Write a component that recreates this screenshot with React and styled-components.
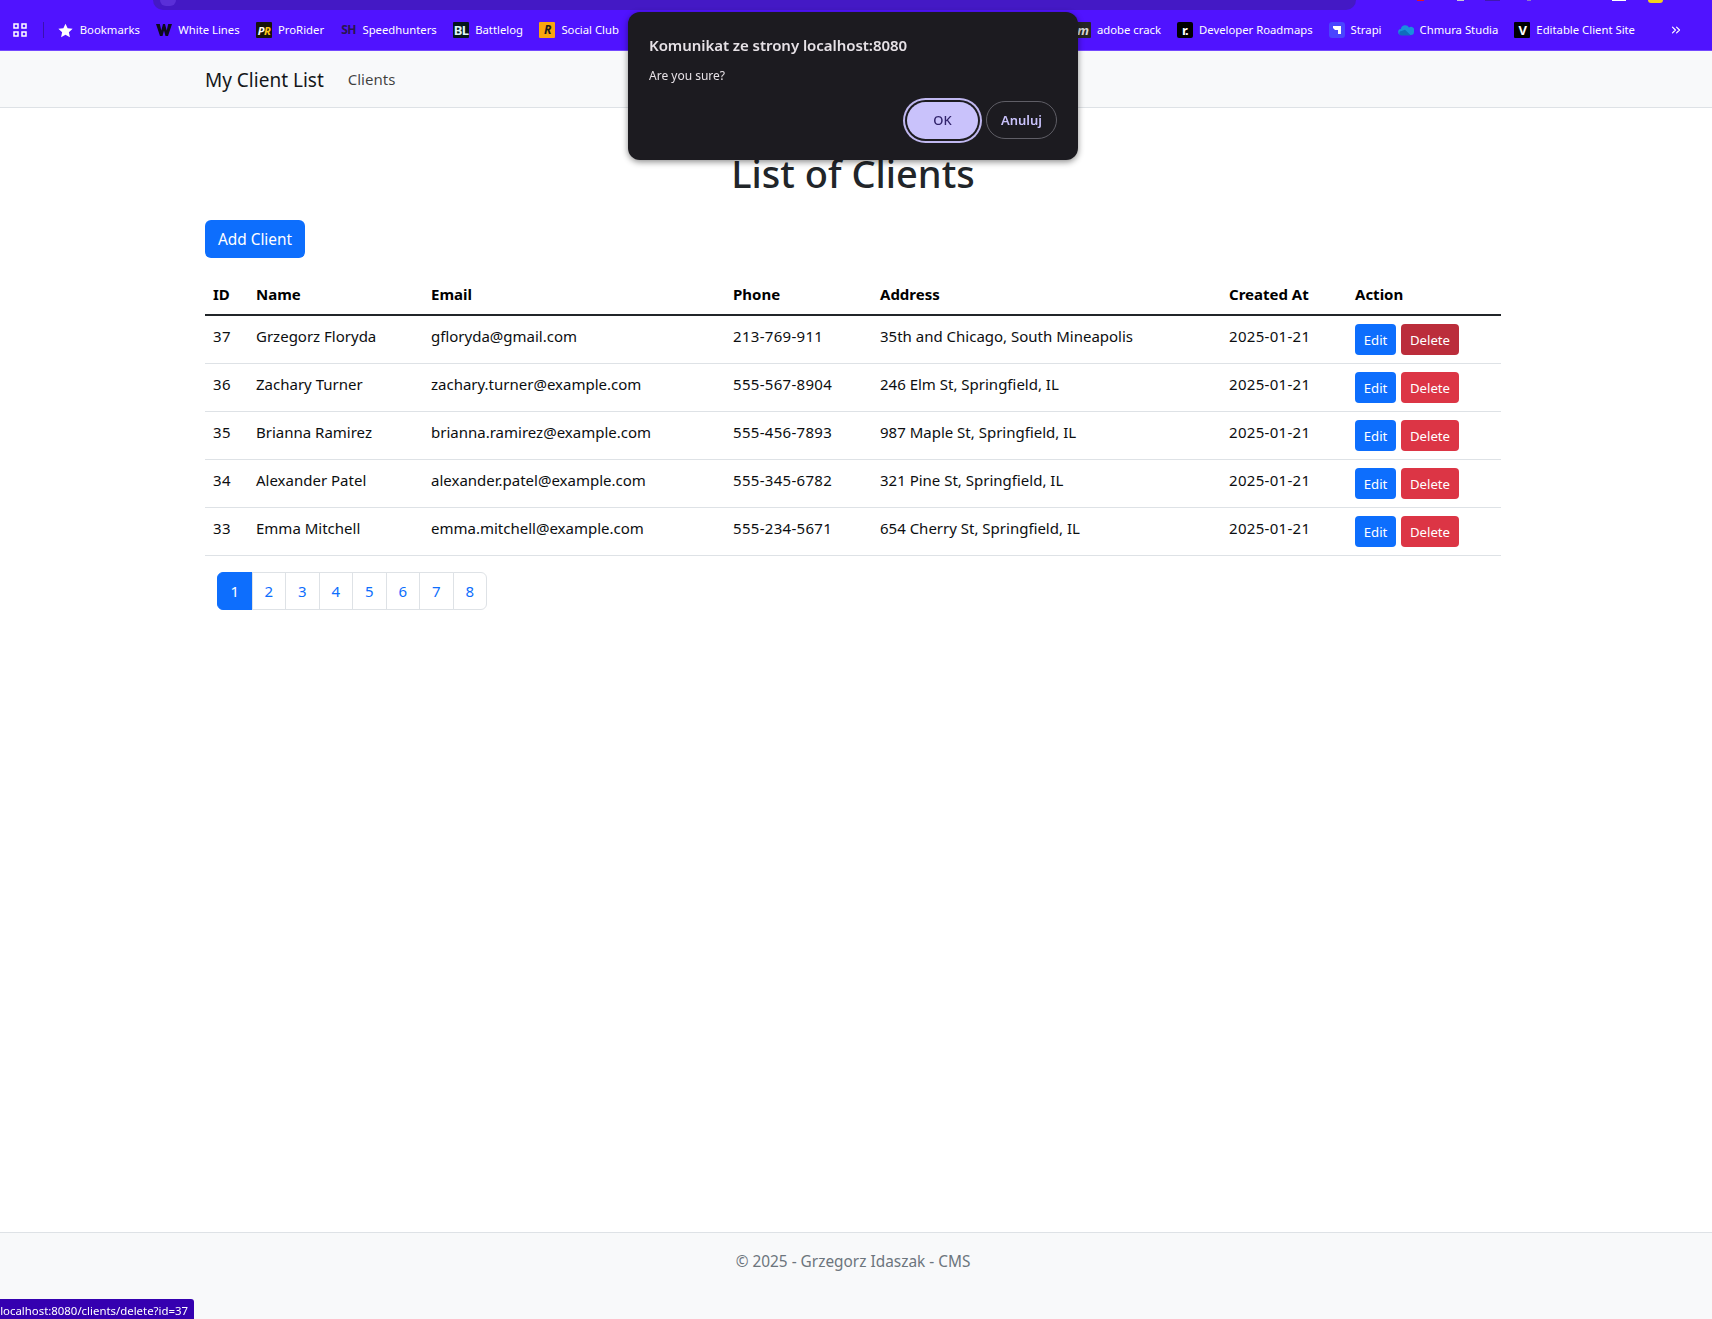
import React from 'react';
import styled, { createGlobalStyle } from 'styled-components';
import { ChevronsRight } from 'lucide-react';

const GlobalStyle = createGlobalStyle`
  * { box-sizing: border-box; }
  body {
    margin: 0;
    font-family: "Noto Sans", "Open Sans", "Liberation Sans", sans-serif;
    font-size: 15px;
    line-height: 24px;
    color: #212529;
    background: #fff;
  }
`;

const Page = styled.div`
  min-height: 100vh;
  display: flex;
  flex-direction: column;
`;

const BrowserTop = styled.div`
  height: 10px;
  background: #5013ff;
  display: flex;
  overflow: hidden;
  padding-left: 153px;
`;

const AddressBar = styled.div`
  width: 1203px;
  height: 10px;
  background: #4419c5;
  border-radius: 0 0 12px 12px;
  padding-left: 7px;
`;

const AddressDot = styled.div`
  width: 16px;
  height: 6px;
  border-radius: 0 0 8px 8px;
  background: #5a2fd8;
`;

const ToolbarBits = styled.div`
  display: flex;
  align-items: flex-start;
  margin-left: 61px;
`;

const ToolbarBit = styled.span`
  display: block;
  width: ${p => p.$w}px;
  height: ${p => p.$h}px;
  margin-left: ${p => p.$gap}px;
  background: ${p => p.$color};
  border-radius: ${p => (p.$round ? '0 0 8px 8px' : '0')};
`;

const BookmarkBar = styled.div`
  height: 41px;
  background: #5013ff;
  border-bottom: 1px solid #7448ff;
  display: flex;
  align-items: center;
  justify-content: space-between;
  padding: 0 29px 0 13px;
  color: #fff;
  font-size: 11.3px;
`;

const BookmarkGroup = styled.div`
  display: flex;
  align-items: center;
  gap: ${p => p.$gap}px;
`;

const Separator = styled.span`
  width: 1px;
  height: 16px;
  background: #3a12b0;
  margin-right: -3px;
`;

const Bookmark = styled.span`
  display: flex;
  align-items: center;
  gap: 6px;
  white-space: nowrap;
`;

const Favicon = styled.span`
  flex: none;
  width: 16px;
  height: 16px;
  display: flex;
  align-items: center;
  justify-content: center;
  background: ${p => p.$bg || 'transparent'};
  color: ${p => p.$color || '#fff'};
  font-size: ${p => p.$size || 10}px;
  font-weight: 700;
  font-style: ${p => (p.$italic ? 'italic' : 'normal')};
  border-radius: ${p => p.$radius || 1}px;
  letter-spacing: -0.6px;
  line-height: 1;
`;

const YellowLetter = styled.span`
  color: #ffc61a;
`;

const MoreButton = styled.span`
  display: flex;
  margin-left: 18px;
`;

const Navbar = styled.nav`
  height: 57px;
  background: #f8f9fa;
  border-bottom: 1px solid #dee2e6;
  display: flex;
  align-items: center;
  padding: 1px 0 0 205px;
`;

const Brand = styled.span`
  font-size: 19px;
  color: #14171a;
  margin-right: 24px;
`;

const NavLink = styled.span`
  color: rgba(0, 0, 0, 0.75);
  padding-bottom: 2px;
`;

const Main = styled.main`
  width: 1296px;
  margin-left: 205px;
  padding-top: 41px;
`;

const Title = styled.h1`
  margin: 0 0 23px;
  font-size: 38px;
  font-weight: 500;
  line-height: 48px;
  text-align: center;
`;

const AddButton = styled.button`
  display: block;
  height: 38px;
  width: 100px;
  padding: 2px 0 0;
  border: 0;
  border-radius: 6px;
  background: #0d6efd;
  color: #fff;
  font: inherit;
  font-size: 15.4px;
  margin-bottom: 16px;
`;

const Table = styled.table`
  width: 100%;
  table-layout: fixed;
  border-collapse: collapse;
  margin-bottom: 16px;
  color: #0c0e10;
`;

const Col = styled.col`
  width: ${p => p.$w}px;
`;

const Th = styled.th`
  text-align: left;
  font-weight: 700;
  padding: 8px;
  border-bottom: 2px solid #212529;
  color: #000;
`;

const Td = styled.td`
  padding: 8px;
  vertical-align: top;
  border-bottom: 1px solid #dee2e6;
  white-space: nowrap;
  letter-spacing: ${p => (p.$numeric ? '0.3px' : '0')};
`;

const ActionRow = styled.div`
  display: flex;
  gap: 5px;
`;

const SmallButton = styled.button`
  height: 31px;
  width: ${p => p.$w}px;
  padding: 1px 0 0;
  border: 0;
  border-radius: 4px;
  background: ${p => p.$bg};
  color: #fff;
  font: inherit;
  font-size: 13.2px;
  line-height: 30px;
`;

const Pagination = styled.ul`
  display: flex;
  list-style: none;
  margin: 0 0 0 12px;
  padding: 0;
`;

const PageItem = styled.li`
  width: 34.5px;
  height: 38px;
  margin-left: -1px;
  display: flex;
  align-items: center;
  justify-content: center;
  border: 1px solid ${p => (p.$active ? '#0d6efd' : '#dee2e6')};
  background: ${p => (p.$active ? '#0d6efd' : '#fff')};
  color: ${p => (p.$active ? '#fff' : '#0d6efd')};
  &:first-child {
    width: 35.5px;
    margin-left: 0;
    border-radius: 6px 0 0 6px;
  }
  &:last-child {
    border-radius: 0 6px 6px 0;
  }
`;

const Footer = styled.footer`
  margin-top: auto;
  height: 87px;
  background: #f8f9fa;
  border-top: 1px solid #dee2e6;
  padding: 17px 6px 0 0;
  text-align: center;
  font-size: 15.4px;
  color: #6c757d;
`;

const Dialog = styled.div`
  position: fixed;
  left: 628px;
  top: 12px;
  width: 450px;
  height: 148px;
  background: #1c1b20;
  border-radius: 12px;
  box-shadow: 0 2px 6px rgba(0, 0, 0, 0.45);
  padding: 21px 21px 0;
  color: #e6e1e6;
`;

const DialogTitle = styled.div`
  font-size: 15px;
  font-weight: 600;
  line-height: 24px;
  letter-spacing: -0.05px;
`;

const DialogMessage = styled.div`
  font-size: 12px;
  line-height: 18px;
  margin-top: 10px;
`;

const DialogActions = styled.div`
  display: flex;
  justify-content: flex-end;
  align-items: center;
  gap: 5px;
  margin-top: 16px;
`;

const OkButton = styled.button`
  width: 71px;
  height: 37px;
  border: 0;
  border-radius: 19px;
  background: #c9c2fb;
  color: #31236b;
  font: inherit;
  font-size: 13px;
  font-weight: 500;
  margin-right: 3px;
  box-shadow: 0 0 0 2px #1c1b20, 0 0 0 4px #c0b8f0;
`;

const CancelButton = styled.button`
  width: 71px;
  height: 38px;
  border: 1px solid #5f5e66;
  border-radius: 19px;
  background: transparent;
  color: #c9c2fb;
  font: inherit;
  font-size: 13px;
  font-weight: 600;
`;

const StatusBubble = styled.div`
  position: fixed;
  left: 0;
  bottom: 0;
  width: 194px;
  height: 20px;
  background: #3500b0;
  color: #fff;
  font-size: 11.4px;
  line-height: 24px;
  border-radius: 0 3px 0 0;
  padding-right: 6px;
  display: flex;
  justify-content: flex-end;
  overflow: hidden;
  white-space: nowrap;
`;

const GridIcon = () => (
  <svg width="14" height="14" viewBox="0 0 14 14" fill="none" stroke="#fff" strokeWidth="1.5">
    <rect x="1" y="1" width="4" height="4" />
    <rect x="9" y="1" width="4" height="4" />
    <rect x="1" y="9" width="4" height="4" />
    <rect x="9" y="9" width="4" height="4" />
  </svg>
);

const StarIcon = () => (
  <Favicon>
    <svg width="15" height="15" viewBox="0 0 24 24" fill="#fff">
      <path d="M12 1l3.400 7.400 8 .9-6 5.400 1.700 8L12 18.700 4.900 22.700l1.700-8-6-5.400 8-.9z" />
    </svg>
  </Favicon>
);

const WIcon = () => (
  <Favicon>
    <svg width="16" height="12" viewBox="0 0 16 12" fill="#0d0a1c">
      <path d="M0 0h3.800l1.500 6.500L7 0h2l1.700 6.500L12.200 0H16l-4 12H9.500L8 6.500 6.500 12H4z" />
    </svg>
  </Favicon>
);

const CloudIcon = () => (
  <Favicon>
    <svg width="16" height="12" viewBox="0 0 16 12">
      <path d="M3.500 11a3 3 0 0 1-.6-6A4.300 4.300 0 0 1 11 3.600 3.400 3.400 0 0 1 16 8a3 3 0 0 1-3 3z" fill="#1a8fdc" />
      <path d="M3.500 11.500a2.300 2.300 0 0 1 0-4.600l3.500-1.200 6 5.800z" fill="#0f6cbd" />
    </svg>
  </Favicon>
);

const StrapiIcon = () => (
  <Favicon $bg="#4945ff" $radius={3}>
    <svg width="8" height="8" viewBox="0 0 8 8" fill="#fff">
      <path d="M0 0h8v8H5V4H2L0 2z" />
    </svg>
  </Favicon>
);

const leftBookmarks = [
  { label: 'Bookmarks', icon: <StarIcon /> },
  { label: 'White Lines', icon: <WIcon /> },
  { label: 'ProRider', icon: <Favicon $bg="#17130a" $italic $size={11}>P<YellowLetter>R</YellowLetter></Favicon> },
  { label: 'Speedhunters', icon: <Favicon $color="#2a1650" $size={12}>SH</Favicon> },
  { label: 'Battlelog', icon: <Favicon $bg="#04161c" $color="#dff6f6" $size={13}>BL</Favicon> },
  { label: 'Social Club', icon: <Favicon $bg="#f9a50d" $color="#1a1a1a" $italic $size={12}>R</Favicon> },
];

const rightBookmarks = [
  { label: 'adobe crack', icon: <Favicon $bg="#262626" $color="#d8d8d8" $italic $size={13}>m</Favicon> },
  { label: 'Developer Roadmaps', icon: <Favicon $bg="#000" $radius={2} $size={13}>r.</Favicon> },
  { label: 'Strapi', icon: <StrapiIcon /> },
  { label: 'Chmura Studia', icon: <CloudIcon /> },
  { label: 'Editable Client Site', icon: <Favicon $bg="#000" $size={13}>V</Favicon> },
];

const clients = [
  { id: 37, name: 'Grzegorz Floryda', email: 'gfloryda@gmail.com', phone: '213-769-911', address: '35th and Chicago, South Mineapolis' },
  { id: 36, name: 'Zachary Turner', email: 'zachary.turner@example.com', phone: '555-567-8904', address: '246 Elm St, Springfield, IL' },
  { id: 35, name: 'Brianna Ramirez', email: 'brianna.ramirez@example.com', phone: '555-456-7893', address: '987 Maple St, Springfield, IL' },
  { id: 34, name: 'Alexander Patel', email: 'alexander.patel@example.com', phone: '555-345-6782', address: '321 Pine St, Springfield, IL' },
  { id: 33, name: 'Emma Mitchell', email: 'emma.mitchell@example.com', phone: '555-234-5671', address: '654 Cherry St, Springfield, IL' },
];

const columns = [
  ['ID', 43], ['Name', 175], ['Email', 302], ['Phone', 147], ['Address', 349], ['Created At', 126], ['Action', 154],
];

export default function App() {
  return (
    <Page>
      <GlobalStyle />
      <BrowserTop>
        <AddressBar><AddressDot /></AddressBar>
        <ToolbarBits>
          <ToolbarBit $w={7} $h={1} $gap={0} $color="#e0142c" />
          <ToolbarBit $w={7} $h={1} $gap={33} $color="#c9c4d8" />
          <ToolbarBit $w={15} $h={1} $gap={21} $color="#3f18b0" />
          <ToolbarBit $w={4} $h={1} $gap={27} $color="#8d78c8" />
          <ToolbarBit $w={14} $h={1} $gap={81} $color="#ffffff" />
          <ToolbarBit $w={15} $h={3} $gap={22} $color="#f2d21b" $round />
        </ToolbarBits>
      </BrowserTop>

      <BookmarkBar>
        <BookmarkGroup $gap={16.4}>
          <GridIcon />
          <Separator />
          {leftBookmarks.map(b => (
            <Bookmark key={b.label}>{b.icon}{b.label}</Bookmark>
          ))}
        </BookmarkGroup>
        <BookmarkGroup $gap={16}>
          {rightBookmarks.map(b => (
            <Bookmark key={b.label}>{b.icon}{b.label}</Bookmark>
          ))}
          <MoreButton><ChevronsRight size={14} /></MoreButton>
        </BookmarkGroup>
      </BookmarkBar>

      <Navbar>
        <Brand>My Client List</Brand>
        <NavLink>Clients</NavLink>
      </Navbar>

      <Main>
        <Title>List of Clients</Title>
        <AddButton>Add Client</AddButton>
        <Table>
          <colgroup>
            {columns.map(([label, w]) => <Col key={label} $w={w} />)}
          </colgroup>
          <thead>
            <tr>
              {columns.map(([label]) => <Th key={label}>{label}</Th>)}
            </tr>
          </thead>
          <tbody>
            {clients.map(c => (
              <tr key={c.id}>
                <Td $numeric>{c.id}</Td>
                <Td>{c.name}</Td>
                <Td>{c.email}</Td>
                <Td $numeric>{c.phone}</Td>
                <Td>{c.address}</Td>
                <Td $numeric>2025-01-21</Td>
                <Td>
                  <ActionRow>
                    <SmallButton $w={41} $bg="#0d6efd">Edit</SmallButton>
                    <SmallButton $w={58} $bg={c.id === 37 ? '#bb2d3b' : '#dc3545'}>Delete</SmallButton>
                  </ActionRow>
                </Td>
              </tr>
            ))}
          </tbody>
        </Table>
        <Pagination>
          {[1, 2, 3, 4, 5, 6, 7, 8].map(n => (
            <PageItem key={n} $active={n === 1}>{n}</PageItem>
          ))}
        </Pagination>
      </Main>

      <Footer>© 2025 - Grzegorz Idaszak - CMS</Footer>

      <Dialog>
        <DialogTitle>Komunikat ze strony localhost:8080</DialogTitle>
        <DialogMessage>Are you sure?</DialogMessage>
        <DialogActions>
          <OkButton>OK</OkButton>
          <CancelButton>Anuluj</CancelButton>
        </DialogActions>
      </Dialog>

      <StatusBubble>localhost:8080/clients/delete?id=37</StatusBubble>
    </Page>
  );
}
